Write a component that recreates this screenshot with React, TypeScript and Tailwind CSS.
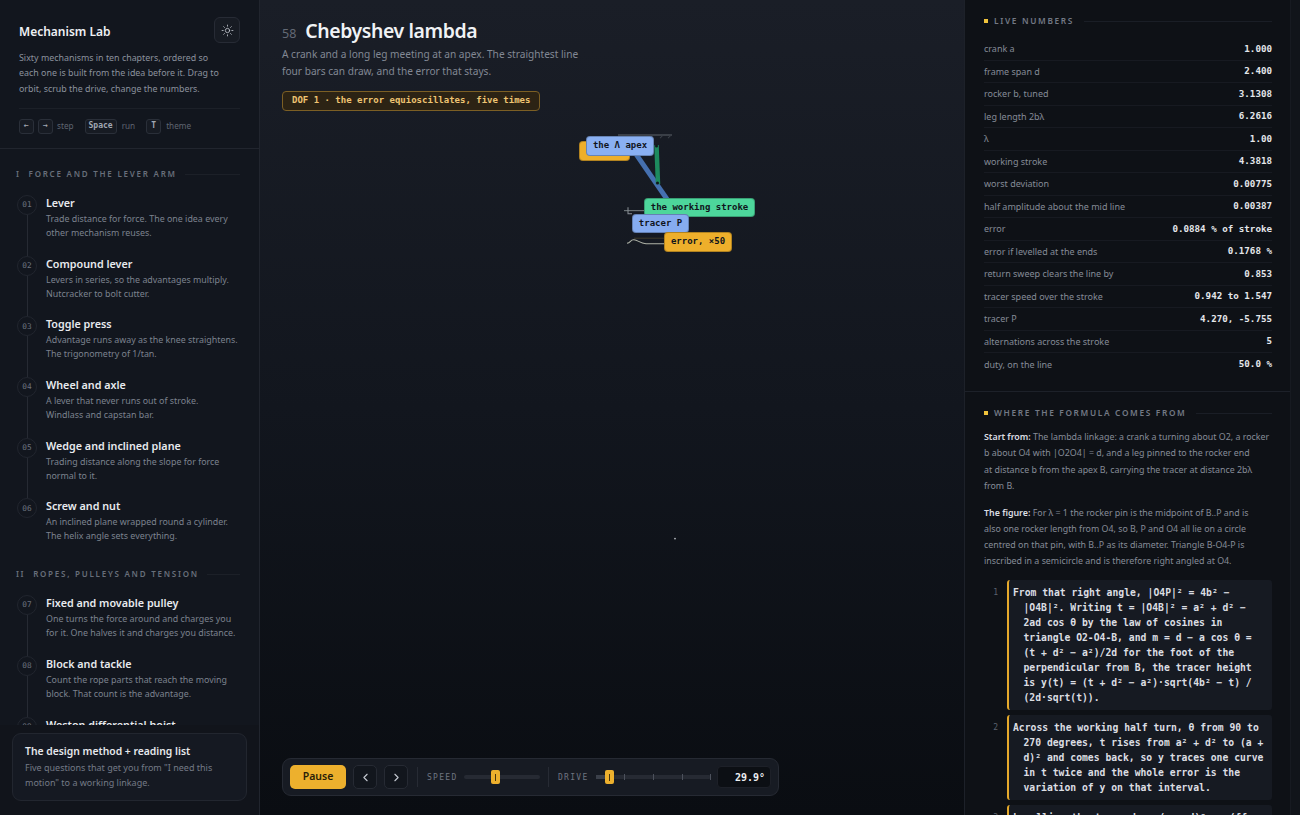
import { Sun, ChevronLeft, ChevronRight } from "lucide-react";

const SANS = "font-['Noto_Sans',sans-serif]";
const MONO = "font-['DejaVu_Sans_Mono',monospace]";

const chapters = [
  {
    num: "I",
    title: "FORCE AND THE LEVER ARM",
    items: [
      ["01", "Lever", ["Trade distance for force. The one idea every", "other mechanism reuses."]],
      ["02", "Compound lever", ["Levers in series, so the advantages multiply.", "Nutcracker to bolt cutter."]],
      ["03", "Toggle press", ["Advantage runs away as the knee straightens.", "The trigonometry of 1/tan."]],
      ["04", "Wheel and axle", ["A lever that never runs out of stroke.", "Windlass and capstan bar."]],
      ["05", "Wedge and inclined plane", ["Trading distance along the slope for force", "normal to it."]],
      ["06", "Screw and nut", ["An inclined plane wrapped round a cylinder.", "The helix angle sets everything."]],
    ],
  },
  {
    num: "II",
    title: "ROPES, PULLEYS AND TENSION",
    items: [
      ["07", "Fixed and movable pulley", ["One turns the force around and charges you", "for it. One halves it and charges you distance."]],
      ["08", "Block and tackle", ["Count the rope parts that reach the moving", "block. That count is the advantage."]],
      ["09", "Weston differential hoist", []],
    ],
  },
] as const;

const numbers = [
  ["crank a", "1.000"],
  ["frame span d", "2.400"],
  ["rocker b, tuned", "3.1308"],
  ["leg length 2bλ", "6.2616"],
  ["λ", "1.00"],
  ["working stroke", "4.3818"],
  ["worst deviation", "0.00775"],
  ["half amplitude about the mid line", "0.00387"],
  ["error", "0.0884 % of stroke"],
  ["error if levelled at the ends", "0.1768 %"],
  ["return sweep clears the line by", "0.853"],
  ["tracer speed over the stroke", "0.942 to 1.547"],
  ["tracer P", "4.270, -5.755"],
  ["alternations across the stroke", "5"],
  ["duty, on the line", "50.0 %"],
];

const steps = [
  [
    "From that right angle, |O4P|² = 4b² −",
    "|O4B|². Writing t = |O4B|² = a² + d² −",
    "2ad cos θ by the law of cosines in",
    "triangle O2-O4-B, and m = d − a cos θ =",
    "(t + d² − a²)/2d for the foot of the",
    "perpendicular from B, the tracer height",
    "is y(t) = (t + d² − a²)·sqrt(4b² − t) /",
    "(2d·sqrt(t)).",
  ],
  [
    "Across the working half turn, θ from 90 to",
    "270 degrees, t rises from a² + d² to (a +",
    "d)² and comes back, so y traces one curve",
    "in t twice and the whole error is the",
    "variation of y on that interval.",
  ],
  ["Levelling the two ends, y(a + d)² = y(ff,"],
];

function Key({ children }: { children: string }) {
  return (
    <span className={`${MONO} h-[15px] px-[3px] min-w-[15px] flex items-center justify-center rounded-[3px] border border-[#2a2f39] bg-[#171b23] text-[8px] font-bold text-[#a2a8b3]`}>
      {children}
    </span>
  );
}

function Label({ className, children }: { className: string; children: string }) {
  return (
    <div className={`${MONO} absolute flex items-center justify-center rounded-[4px] border border-black/25 text-[9px] font-semibold text-[#10141c] ${className}`}>
      {children}
    </div>
  );
}

function Section({ children }: { children: string }) {
  return (
    <div className="flex items-center gap-[6px] h-[12px]">
      <span className="size-[4px] bg-[#f0c33c]" />
      <span className={`${SANS} text-[8.3px] font-semibold tracking-[0.2em] text-[#737985] whitespace-nowrap`}>{children}</span>
      <span className="flex-1 h-px bg-[#1a1e26] ml-[4px]" />
    </div>
  );
}

export default function App() {
  return (
    <div className={`${SANS} w-[1300px] h-[815px] flex overflow-hidden bg-[#0c0f14]`}>
      {/* left */}
      <aside className="w-[260px] h-full shrink-0 flex flex-col border-r border-[#21252e] bg-[#12161e]">
        <header className="h-[149px] shrink-0 border-b border-[#21252e] pl-[19px] pr-[19px] pt-[17px]">
          <div className="flex justify-between h-[28px]">
            <h1 className="text-[12px] leading-[29px] font-semibold text-[#eef0f4]">Mechanism Lab</h1>
            <button className="size-[26px] flex items-center justify-center rounded-[6px] border border-[#272b35] bg-[#171b23] text-[#c4c8d0]">
              <Sun size={13} strokeWidth={1.5} />
            </button>
          </div>
          <p className="mt-[5px] text-[8.9px] leading-[15.3px] text-[#8b919d] whitespace-nowrap">
            Sixty mechanisms in ten chapters, ordered so<br />each one is built from the idea before it. Drag to<br />orbit, scrub the drive, change the numbers.
          </p>
          <div className="mt-[12px] border-t border-[#1c2028] pt-[10px] flex items-center text-[8.2px] text-[#5f6571]">
            <Key>←</Key>
            <span className="w-[4px]" />
            <Key>→</Key>
            <span className="ml-[4px]">step</span>
            <span className="w-[11px]" />
            <Key>Space</Key>
            <span className="ml-[5px]">run</span>
            <span className="w-[11px]" />
            <Key>T</Key>
            <span className="ml-[5px]">theme</span>
          </div>
        </header>
        <nav className="flex-1 min-h-0 overflow-hidden pl-[16px] pr-[19px] pt-[20px]">
          {chapters.map((c) => (
            <section key={c.num} className="mb-[10px]">
              <div className="flex items-center h-[10px] gap-[8px]">
                <span className="text-[8px] font-semibold tracking-[0.2em] text-[#686e7a]">{c.num}</span>
                <span className="text-[8px] font-semibold tracking-[0.22em] text-[#686e7a] whitespace-nowrap">{c.title}</span>
                <span className="flex-1 h-px bg-[#1c2028]" />
              </div>
              <div className="mt-[16px]">
                {c.items.map(([n, t, d], i) => (
                  <div key={n} className="flex h-[60.7px]">
                    <div className="w-[20px] flex flex-col items-center shrink-0 ml-[1px]">
                      <span className={`${MONO} size-[20px] shrink-0 rounded-full border border-[#21252e] flex items-center justify-center text-[7.8px] text-[#6c727e]`}>{n}</span>
                      {i < c.items.length - 1 && <span className="w-px flex-1 bg-[#262a33]" />}
                    </div>
                    <div className="ml-[9px] min-w-0">
                      <div className="text-[10.75px] leading-[16px] font-semibold text-[#e8eaee] whitespace-nowrap">{t}</div>
                      <div className="mt-[1px] text-[8.9px] leading-[14px] text-[#7c828e] whitespace-nowrap">
                        {d.map((l) => (
                          <div key={l}>{l}</div>
                        ))}
                      </div>
                    </div>
                  </div>
                ))}
              </div>
            </section>
          ))}
        </nav>
        <div className="h-[90px] shrink-0 bg-[#11141b] px-[12px] pt-[8px]">
          <div className="h-[68px] rounded-[9px] border border-[#22262f] bg-[#151922] pl-[12px] pt-[9px]">
            <div className="text-[10.35px] leading-[17px] font-semibold text-[#e6e8ec]">The design method + reading list</div>
            <div className="mt-[1px] text-[9px] leading-[14.5px] text-[#747a86] whitespace-nowrap">
              Five questions that get you from "I need this
              <br />
              motion" to a working linkage.
            </div>
          </div>
        </div>
      </aside>

      {/* main */}
      <main className="w-[704px] shrink-0 h-full flex flex-col bg-gradient-to-b from-[#1a1e27] via-[#12161e] to-[#0a0d12]">
        <div className="pl-[22px] pt-[17px] h-[111px] shrink-0">
          <div className="flex items-baseline h-[28px]">
            <span className="text-[12.5px] text-[#636975]">58</span>
            <h2 className="ml-[9px] text-[19.4px] leading-[28px] font-semibold tracking-[-0.02em] text-[#f0f2f5]">Chebyshev lambda</h2>
          </div>
          <p className="mt-[1px] text-[10.15px] leading-[17px] text-[#828894] whitespace-nowrap">
            A crank and a long leg meeting at an apex. The straightest line<br />four bars can draw, and the error that stays.
          </p>
          <div className={`${MONO} mt-[11px] inline-flex items-center h-[20px] px-[9px] rounded-[4px] border border-[#7c5f24] bg-[#2c2314] text-[9px] font-semibold text-[#eec472]`}>
            DOF 1 · the error equioscillates, five times
          </div>
        </div>

        <div className="relative flex-1 min-h-0">
          <svg className="absolute inset-0 w-full h-full" viewBox="260 111 704 646" preserveAspectRatio="none" fill="none">
            <path d="M618 135H672" stroke="#3a3f47" strokeWidth="2" />
            <path d="M640 138l3 -3M650 138l3 -3M660 138l3 -3M668 138l3 -3" stroke="#3a3f47" strokeWidth="1" />
            <path d="M636 154L667 199" stroke="#4570b0" strokeWidth="5" />
            <path d="M656.500 145L658 184" stroke="#1d8a5e" strokeWidth="4.500" />
            <circle cx="656.500" cy="146" r="1.500" fill="#11151c" />
            <circle cx="657.500" cy="183" r="1.500" fill="#11151c" />
            <path d="M624 210.500H646" stroke="#7a8085" strokeWidth="1" />
            <path d="M628 207V213.500H632" stroke="#8a8f96" strokeWidth="1" />
            <path d="M627 243C631 243 630 239 634 239.500C638 240 640 243 646 243.500H664" stroke="#b0b4a8" strokeWidth="1" />
            <path d="M634 238H664" stroke="#3f3a2a" strokeWidth="1" />
            <circle cx="675" cy="538" r="0.800" fill="#c8ccd2" />
          </svg>
          <Label className="left-[319px] top-[30px] w-[51px] h-[20px] bg-[#eeaf2b]">{" "}</Label>
          <Label className="left-[326px] top-[25px] w-[68px] h-[20px] bg-[#8ab0f2]">the Λ apex</Label>
          <Label className="left-[384px] top-[87px] w-[111px] h-[19px] bg-[#4dd69b]">the working stroke</Label>
          <Label className="left-[372px] top-[103px] w-[57px] h-[19px] bg-[#86acf0]">tracer P</Label>
          <Label className="left-[404px] top-[121px] w-[68px] h-[20px] bg-[#eeaf2b]">error, ×50</Label>
        </div>

        <div className="ml-[22px] mb-[19px] w-[497px] h-[38px] shrink-0 flex items-center rounded-[9px] border border-[#262a33] bg-[#171b23] pl-[7px]">
          <button className="w-[56px] h-[24px] rounded-[5px] bg-[#edb02d] text-[10.5px] font-semibold text-[#2a1e08]">Pause</button>
          <button className="ml-[7px] size-[24px] flex items-center justify-center rounded-[5px] border border-[#262a33] bg-[#12161d] text-[#c4c8d0]"><ChevronLeft size={13} /></button>
          <button className="ml-[7px] size-[24px] flex items-center justify-center rounded-[5px] border border-[#262a33] bg-[#12161d] text-[#c4c8d0]"><ChevronRight size={13} /></button>
          <span className="ml-[9px] w-px h-[20px] bg-[#272b34]" />
          <span className={`${MONO} ml-[9px] w-[37px] pt-[1px] text-[8px] tracking-[0.16em] text-[#6e7480]`}>SPEED</span>
          <div className="relative w-[76px] h-[4px] rounded-full bg-[#262a33]">
            <span className="absolute left-[27px] top-[-5px] w-[9px] h-[14px] rounded-[2px] bg-[#edb02d] flex items-center justify-center"><span className="w-px h-[7px] bg-[#4a360c]" /></span>
          </div>
          <span className="ml-[8px] w-px h-[20px] bg-[#272b34]" />
          <span className={`${MONO} ml-[9px] w-[38px] pt-[1px] text-[8px] tracking-[0.16em] text-[#6e7480]`}>DRIVE</span>
          <div className="relative w-[115px] h-[4px] rounded-full bg-[#262a33]">
            <span className="absolute left-0 top-0 w-[13px] h-[4px] bg-[#3a3f49]" />
            <span className="absolute left-[28px] top-[-1px] w-px h-[6px] bg-[#4c515c]" />
            <span className="absolute left-[57px] top-[-1px] w-px h-[6px] bg-[#4c515c]" />
            <span className="absolute left-[86px] top-[-1px] w-px h-[6px] bg-[#4c515c]" />
            <span className="absolute left-[114px] top-[-1px] w-px h-[6px] bg-[#4c515c]" />
            <span className="absolute left-[9px] top-[-5px] w-[9px] h-[14px] rounded-[2px] bg-[#edb02d] flex items-center justify-center"><span className="w-px h-[7px] bg-[#4a360c]" /></span>
          </div>
          <span className={`${MONO} ml-[6px] w-[54px] h-[22px] flex items-center justify-end pr-[5px] rounded-[4px] border border-[#1d2028] bg-[#0c0f14] text-[10px] font-semibold text-[#eceef2]`}>29.9°</span>
        </div>
      </main>

      {/* right */}
      <aside className="flex-1 min-w-0 h-full flex border-l border-[#1d2129] bg-[#0e1116]">
        <div className="w-[325px] shrink-0 h-full overflow-hidden">
          <section className="h-[392px] border-b border-[#1d2129] pl-[19px] pr-[18px] pt-[15px]">
            <Section>LIVE NUMBERS</Section>
            <dl className="mt-[11px]">
              {numbers.map(([k, v]) => (
                <div key={k} className="h-[22.5px] flex items-center justify-between border-b border-[#171a21] last:border-b-0">
                  <dt className="text-[9px] text-[#858b97]">{k}</dt>
                  <dd className={`${MONO} text-[9.2px] font-bold text-[#e4e6ea]`}>{v}</dd>
                </div>
              ))}
            </dl>
          </section>
          <section className="pl-[19px] pr-[18px] pt-[15px]">
            <Section>WHERE THE FORMULA COMES FROM</Section>
            <p className="mt-[10px] text-[8.85px] leading-[16.4px] text-[#868c98] whitespace-nowrap">
              <strong className="font-semibold text-[#dcdee3]">Start from:</strong> The lambda linkage: a crank a turning about O2, a rocker<br />b about O4 with |O2O4| = d, and a leg pinned to the rocker end<br />at distance b from the apex B, carrying the tracer at distance 2bλ<br />from B.
            </p>
            <p className="mt-[10.6px] text-[8.85px] leading-[16px] text-[#868c98] whitespace-nowrap">
              <strong className="font-semibold text-[#dcdee3]">The figure:</strong> For λ = 1 the rocker pin is the midpoint of B..P and is<br />also one rocker length from O4, so B, P and O4 all lie on a circle<br />centred on that pin, with B..P as its diameter. Triangle B-O4-P is<br />inscribed in a semicircle and is therefore right angled at O4.
            </p>
            <ol className="mt-[11px] flex flex-col gap-[5px]">
              {steps.map((lines, i) => (
                <li key={i} className="flex">
                  <span className={`${MONO} w-[23px] shrink-0 pr-[9px] pt-[5px] text-right text-[8px] leading-[15px] text-[#5c626e]`}>{i + 1}</span>
                  <div className={`${MONO} flex-1 rounded-[3px] border-l-2 border-[#e5a92b] bg-[#161a22] py-[5px] pl-[4px] text-[9.73px] leading-[15px] font-semibold text-[#dcdee3] whitespace-nowrap`}>
                    {lines.map((l, j) => (
                      <div key={l} className={j === 0 ? "" : "pl-[10.5px]"}>{l}</div>
                    ))}
                  </div>
                </li>
              ))}
            </ol>
          </section>
        </div>
        <div className="flex-1 bg-[#11141a] border-l border-[#171a21]" />
      </aside>
    </div>
  );
}
